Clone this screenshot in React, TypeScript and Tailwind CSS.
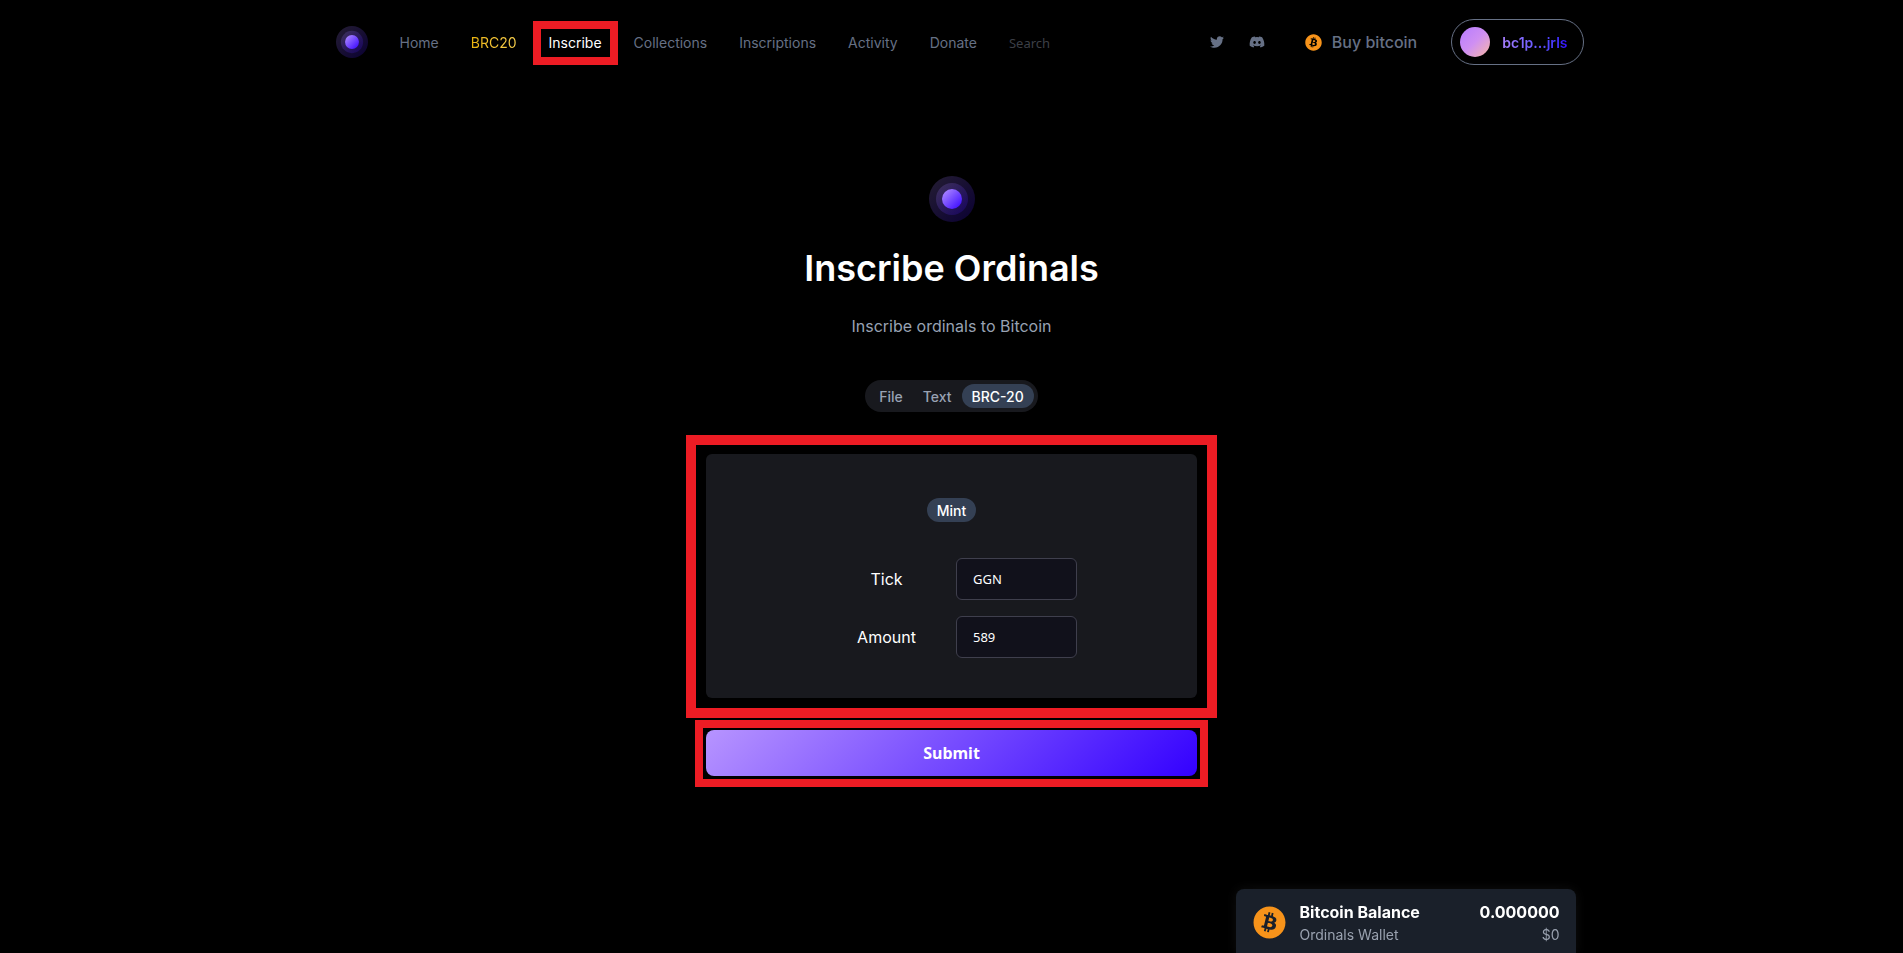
import { useId, useState } from 'react';
import { FaBitcoin, FaDiscord, FaTwitter } from 'react-icons/fa';

const NAV_LINKS = ['Home', 'BRC20', 'Inscribe', 'Collections', 'Inscriptions', 'Activity', 'Donate'];
const MODES = ['File', 'Text', 'BRC-20'];

function navColor(label: string) {
  if (label === 'BRC20') return 'bg-gradient-to-r from-[#eab308] to-[#fcd34d] bg-clip-text text-transparent';
  if (label === 'Inscribe') return 'text-white';
  return 'text-[#667085]';
}

function Logo({ className }: { className: string }) {
  const id = useId();
  return (
    <svg viewBox="0 0 46 46" className={className} aria-hidden="true">
      <defs>
        <linearGradient id={id} x1="0" y1="0" x2="1" y2="1">
          <stop offset="0" stopColor="#b794ff" />
          <stop offset="1" stopColor="#3300ff" />
        </linearGradient>
      </defs>
      <circle cx="23" cy="23" r="23" fill={`url(#${id})`} opacity="0.2" />
      <circle cx="23" cy="23" r="16" fill={`url(#${id})`} opacity="0.2" />
      <circle cx="23" cy="23" r="10" fill={`url(#${id})`} />
    </svg>
  );
}

function Header() {
  return (
    <header className="mx-auto flex max-w-7xl items-center justify-between pt-[19px] pr-2 pl-6">
      <nav className="flex items-center gap-8 text-sm">
        <a href="#home" aria-label="Ordinals Wallet">
          <Logo className="size-8" />
        </a>
        <div className="flex items-center gap-8 pt-0.5">
          {NAV_LINKS.map((label) => (
            <a key={label} href={`#${label.toLowerCase()}`} className="relative">
              <span className={navColor(label)}>{label}</span>
              {label === 'Inscribe' && (
                <span className="absolute -inset-x-4 -inset-y-3 border-8 border-[#ed1c24]" />
              )}
            </a>
          ))}
          <input
            type="search"
            aria-label="Search"
            placeholder="Search"
            className="w-24 bg-transparent font-['Noto_Sans',sans-serif] text-[13px] text-white outline-none placeholder:text-[#3c3f46]"
          />
        </div>
      </nav>

      <div className="flex items-center text-[#667085]">
        <a href="#twitter" aria-label="Twitter">
          <FaTwitter size={14} />
        </a>
        <a href="#discord" aria-label="Discord" className="ml-[25px]">
          <FaDiscord size={16} />
        </a>
        <a href="#buy" className="ml-10 flex items-center gap-2.5 font-medium">
          <FaBitcoin size={17} className="text-[#f7931a]" />
          Buy bitcoin
        </a>
        <button
          type="button"
          className="ml-[34px] flex h-[46px] items-center gap-3 rounded-full border border-[#667085] pr-[15px] pl-2 text-sm font-semibold"
        >
          <span className="size-[30px] rounded-full bg-gradient-to-br from-[#b77bff] via-[#cf8ff2] to-[#fbb4a0]" />
          <span className="bg-gradient-to-r from-[#a97fff] to-[#3300ff] bg-clip-text pt-px text-transparent">
            bc1p...jrls
          </span>
        </button>
      </div>
    </header>
  );
}

function ModeSwitch() {
  const [mode, setMode] = useState('BRC-20');
  return (
    <div className="mt-[42px] flex rounded-full bg-[#18191e] p-1 text-sm font-medium">
      {MODES.map((m) => (
        <button
          key={m}
          type="button"
          onClick={() => setMode(m)}
          className={`h-6 rounded-full px-2.5 pt-0.5 ${m === mode ? 'bg-[#344054] text-white' : 'text-[#98a2b3]'}`}
        >
          {m}
        </button>
      ))}
    </div>
  );
}

function Field({ id, label, value }: { id: string; label: string; value: string }) {
  return (
    <>
      <label htmlFor={id}>{label}</label>
      <input
        id={id}
        defaultValue={value}
        className="h-[42px] w-[121px] rounded-md border border-[#3f3f4d] bg-[#11111b] px-4 font-['Noto_Sans',sans-serif] text-[13px] outline-none"
      />
    </>
  );
}

function BalanceCard() {
  return (
    <aside className="fixed inset-x-0 bottom-0">
      <div className="mx-auto flex max-w-7xl justify-end px-4">
        <div className="flex h-16 w-[340px] items-center gap-3.5 rounded-t-lg bg-[#1a202a] pt-[3px] pr-4 pl-[17px] shadow-[0_0_12px_rgba(255,255,255,0.06)]">
          <FaBitcoin size={33} className="text-[#f7931a]" />
          <div className="flex flex-1 flex-col gap-px">
            <div className="flex justify-between font-bold">
              <span>Bitcoin Balance</span>
              <span>0.000000</span>
            </div>
            <div className="flex justify-between text-sm text-gray-400">
              <span>Ordinals Wallet</span>
              <span>$0</span>
            </div>
          </div>
        </div>
      </div>
    </aside>
  );
}

export default function App() {
  return (
    <div className="min-h-screen bg-black font-['Inter',sans-serif] text-white">
      <Header />

      <main className="flex flex-col items-center pt-[111px]">
        <Logo className="size-[46px]" />
        <h1 className="mt-[26px] text-4xl font-semibold">Inscribe Ordinals</h1>
        <p className="mt-[26px] text-[#98a2b3]">Inscribe ordinals to Bitcoin</p>
        <ModeSwitch />

        <form className="mt-[23px] flex w-full flex-col items-center gap-0.5" onSubmit={(e) => e.preventDefault()}>
          <div className="w-full max-w-[531px] border-10 border-[#ed1c24] p-2.5 pt-[9px]">
            <div className="flex flex-col items-center rounded-md bg-[#18191e] pt-11 pb-10">
              <button type="button" className="h-6 rounded-full bg-[#344054] px-2.5 pt-0.5 text-sm font-medium">
                Mint
              </button>
              <div className="mt-9 grid w-[260px] grid-cols-2 items-center justify-items-center gap-y-4">
                <Field id="tick" label="Tick" value="GGN" />
                <Field id="amount" label="Amount" value="589" />
              </div>
            </div>
          </div>
          <div className="w-full max-w-[513px] border-8 border-[#ed1c24] p-[3px] pt-0.5">
            <button
              type="submit"
              className="h-[46px] w-full rounded-lg bg-[linear-gradient(135deg,#b794ff,#3300ff)] font-['Noto_Sans',sans-serif] font-bold"
            >
              Submit
            </button>
          </div>
        </form>
      </main>

      <BalanceCard />
    </div>
  );
}
